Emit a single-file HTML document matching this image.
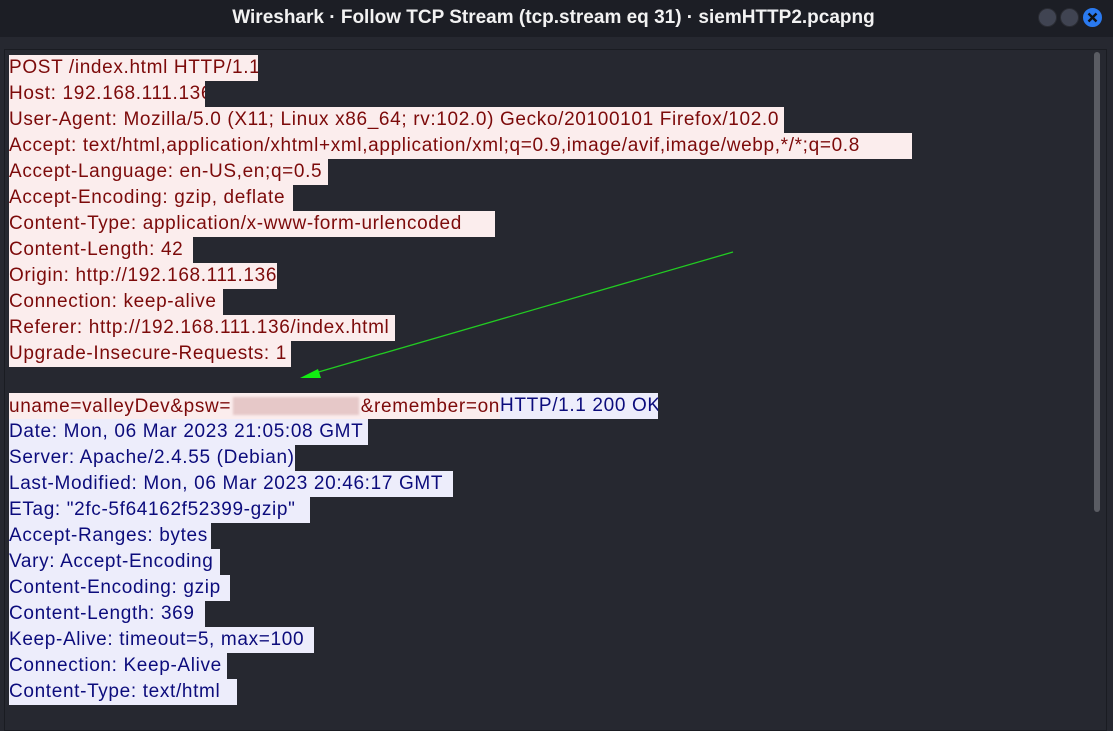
<!DOCTYPE html>
<html><head><meta charset="utf-8"><style>
html,body{margin:0;padding:0;width:1113px;height:720px;overflow:hidden;background:#262830;font-family:"Liberation Sans",sans-serif}
.title{position:absolute;left:0;top:0;width:1113px;height:37px;background:#1c1e25;color:#f2f2f2;font-weight:bold;font-size:19px;text-align:center;line-height:36px}
.title span{position:relative;left:-3px}
.btn{position:absolute;top:8px;width:17px;height:17px;border-radius:50%;background:#404452;border:1px solid #2a2c33}
.panel{position:absolute;left:4px;top:49px;width:1101px;height:680px;border:1px solid #1a1c22;background:#262830}
.sb{position:absolute;left:1094px;top:52px;width:6px;height:460px;background:#5a5c63;border-radius:3px}
.l{position:absolute;left:9px;height:26px;line-height:25px;font-size:19px;letter-spacing:0.65px;white-space:nowrap;overflow:hidden}
.r{background:#fbeded;color:#7c0a0a}
.b{background:#ededfb;color:#0c0c7c}
</style></head><body>
<div class="title"><span>Wireshark · Follow TCP Stream (tcp.stream eq 31) · siemHTTP2.pcapng</span></div>
<div class="btn" style="left:1038px"></div>
<div class="btn" style="left:1060px"></div>
<div class="btn" style="left:1083px;background:#2a7af0;border-color:#2a7af0"></div>
<svg style="position:absolute;left:1083px;top:8px" width="19" height="19"><path d="M5.5 5.5L13.5 13.5M13.5 5.5L5.5 13.5" stroke="#111" stroke-width="2.4"/></svg>
<div class="panel"></div>
<div class="sb"></div>
<div class="l r" style="top:55px;width:249px">POST /index.html HTTP/1.1</div>
<div class="l r" style="top:81px;width:196px">Host: 192.168.111.136</div>
<div class="l r" style="top:107px;width:775px">User-Agent: Mozilla/5.0 (X11; Linux x86_64; rv:102.0) Gecko/20100101 Firefox/102.0</div>
<div class="l r" style="top:133px;width:903px">Accept: text/html,application/xhtml+xml,application/xml;q=0.9,image/avif,image/webp,*/*;q=0.8</div>
<div class="l r" style="top:159px;width:319px">Accept-Language: en-US,en;q=0.5</div>
<div class="l r" style="top:185px;width:284px">Accept-Encoding: gzip, deflate</div>
<div class="l r" style="top:211px;width:486px">Content-Type: application/x-www-form-urlencoded</div>
<div class="l r" style="top:237px;width:184px">Content-Length: 42</div>
<div class="l r" style="top:263px;width:268px">Origin: http://192.168.111.136</div>
<div class="l r" style="top:289px;width:214px">Connection: keep-alive</div>
<div class="l r" style="top:315px;width:386px">Referer: http://192.168.111.136/index.html</div>
<div class="l r" style="top:341px;width:282px">Upgrade-Insecure-Requests: 1</div>
<div class="l r" style="top:393px;width:491px;display:flex;align-items:center"><span>uname=valleyDev&amp;psw=</span><span style="flex:1;height:18px;margin:0 2px;background:#e6c8c8;filter:blur(1px)"></span><span>&amp;remember=on</span></div>
<div class="l b" style="top:393px;left:500px;width:158px">HTTP/1.1 200 OK</div>
<div class="l b" style="top:419px;width:359px">Date: Mon, 06 Mar 2023 21:05:08 GMT</div>
<div class="l b" style="top:445px;width:286px">Server: Apache/2.4.55 (Debian)</div>
<div class="l b" style="top:471px;width:444px">Last-Modified: Mon, 06 Mar 2023 20:46:17 GMT</div>
<div class="l b" style="top:497px;width:301px">ETag: "2fc-5f64162f52399-gzip"</div>
<div class="l b" style="top:523px;width:202px">Accept-Ranges: bytes</div>
<div class="l b" style="top:549px;width:211px">Vary: Accept-Encoding</div>
<div class="l b" style="top:575px;width:221px">Content-Encoding: gzip</div>
<div class="l b" style="top:601px;width:196px">Content-Length: 369</div>
<div class="l b" style="top:627px;width:305px">Keep-Alive: timeout=5, max=100</div>
<div class="l b" style="top:653px;width:218px">Connection: Keep-Alive</div>
<div class="l b" style="top:679px;width:228px">Content-Type: text/html</div>
<svg style="position:absolute;left:0;top:0" width="1113" height="720"><line x1="733" y1="252" x2="315" y2="373" stroke="#22cc22" stroke-width="1.3"/><path d="M300 378L318 369L321 378Z" fill="#11ee11"/></svg>
</body></html>
